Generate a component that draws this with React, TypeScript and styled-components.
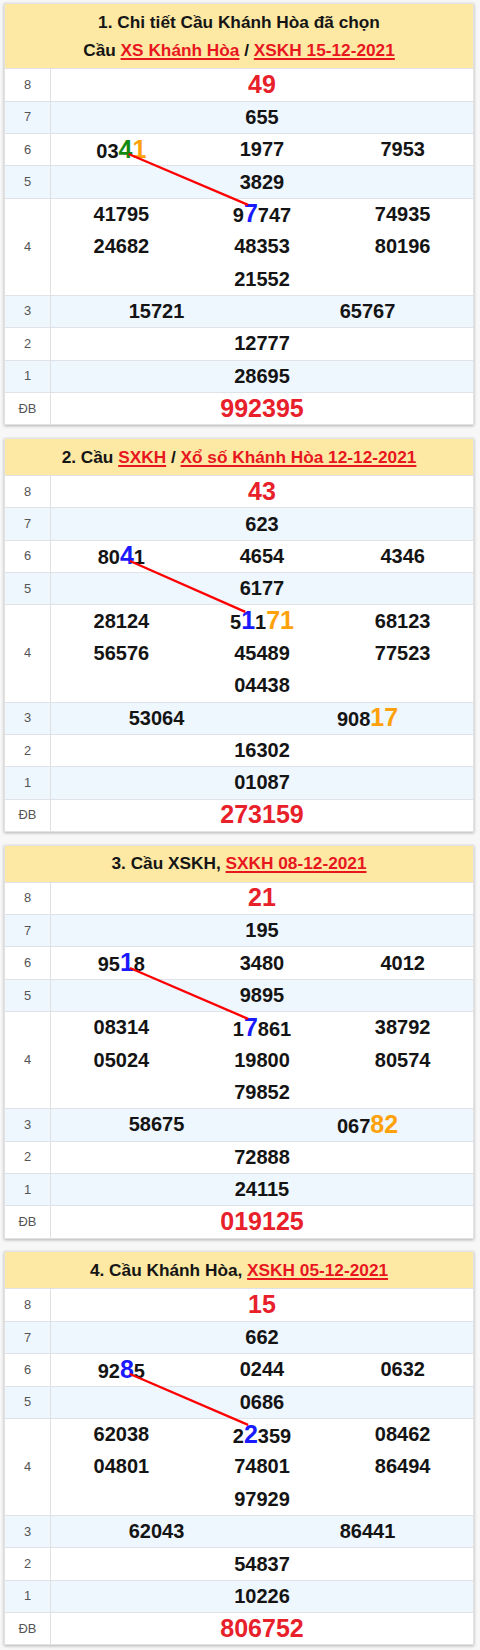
import React, { useLayoutEffect, useRef, useState } from "react";
import styled, { createGlobalStyle } from "styled-components";

const U = 356 / 11;

type Hl = { at: number; len?: number; color: string; anchor?: "from" | "to" };
type Num = { v: string; hl?: Hl[] };
type Item = string | Num;
type RowData = { label: string; items: Item[]; cols: number; red?: boolean; lines?: number };
type TitlePart = { t: string; link?: boolean };
type CardData = { lines: TitlePart[][]; rows: RowData[] };

const GREEN = "#128a12";
const ORANGE = "#ffa10a";
const BLUE = "#1a1aff";

const mkRows = (
  r8: string,
  r7: string,
  r6: Item[],
  r5: string,
  r4: Item[],
  r3: Item[],
  r2: string,
  r1: string,
  db: string
): RowData[] => [
  { label: "8", items: [r8], cols: 1, red: true },
  { label: "7", items: [r7], cols: 1 },
  { label: "6", items: r6, cols: 3 },
  { label: "5", items: [r5], cols: 1 },
  { label: "4", items: r4, cols: 3, lines: 3 },
  { label: "3", items: r3, cols: 2 },
  { label: "2", items: [r2], cols: 1 },
  { label: "1", items: [r1], cols: 1 },
  { label: "ĐB", items: [db], cols: 1, red: true },
];

const cards: CardData[] = [
  {
    lines: [
      [{ t: "1. Chi tiết Cầu Khánh Hòa đã chọn" }],
      [
        { t: "Cầu " },
        { t: "XS Khánh Hòa", link: true },
        { t: " / " },
        { t: "XSKH 15-12-2021", link: true },
      ],
    ],
    rows: mkRows(
      "49",
      "655",
      [
        { v: "0341", hl: [{ at: 2, color: GREEN, anchor: "from" }, { at: 3, color: ORANGE }] },
        "1977",
        "7953",
      ],
      "3829",
      ["41795", { v: "97747", hl: [{ at: 1, color: BLUE, anchor: "to" }] }, "74935", "24682", "48353", "80196", "21552"],
      ["15721", "65767"],
      "12777",
      "28695",
      "992395"
    ),
  },
  {
    lines: [
      [
        { t: "2. Cầu " },
        { t: "SXKH", link: true },
        { t: " / " },
        { t: "Xổ số Khánh Hòa 12-12-2021", link: true },
      ],
    ],
    rows: mkRows(
      "43",
      "623",
      [{ v: "8041", hl: [{ at: 2, color: BLUE, anchor: "from" }] }, "4654", "4346"],
      "6177",
      [
        "28124",
        { v: "51171", hl: [{ at: 1, color: BLUE, anchor: "to" }, { at: 3, len: 2, color: ORANGE }] },
        "68123",
        "56576",
        "45489",
        "77523",
        "04438",
      ],
      ["53064", { v: "90817", hl: [{ at: 3, len: 2, color: ORANGE }] }],
      "16302",
      "01087",
      "273159"
    ),
  },
  {
    lines: [[{ t: "3. Cầu XSKH, " }, { t: "SXKH 08-12-2021", link: true }]],
    rows: mkRows(
      "21",
      "195",
      [{ v: "9518", hl: [{ at: 2, color: BLUE, anchor: "from" }] }, "3480", "4012"],
      "9895",
      ["08314", { v: "17861", hl: [{ at: 1, color: BLUE, anchor: "to" }] }, "38792", "05024", "19800", "80574", "79852"],
      ["58675", { v: "06782", hl: [{ at: 3, len: 2, color: ORANGE }] }],
      "72888",
      "24115",
      "019125"
    ),
  },
  {
    lines: [[{ t: "4. Cầu Khánh Hòa, " }, { t: "XSKH 05-12-2021", link: true }]],
    rows: mkRows(
      "15",
      "662",
      [{ v: "9285", hl: [{ at: 2, color: BLUE, anchor: "from" }] }, "0244", "0632"],
      "0686",
      ["62038", { v: "22359", hl: [{ at: 1, color: BLUE, anchor: "to" }] }, "08462", "04801", "74801", "86494", "97929"],
      ["62043", "86441"],
      "54837",
      "10226",
      "806752"
    ),
  },
];

const GlobalStyle = createGlobalStyle`
  html, body { margin: 0; padding: 0; background: #f7f7f7; }
  body { font-family: "Liberation Sans", Arial, sans-serif; }
  * { box-sizing: border-box; }
`;

const Page = styled.div`
  display: flex;
  flex-direction: column;
  gap: 12.6px;
  padding: 2.7px 6px 4px 4px;
  width: 480px;
`;

const Card = styled.section`
  background: #fff;
  border: 1px solid #e2e2e2;
  box-shadow: 0 1px 3px rgba(0, 0, 0, 0.28);
`;

const Header = styled.div`
  background: #fde9a4;
  padding: 3.9px 6px;
  text-align: center;
`;

const TitleLine = styled.div`
  font-size: 17.26px;
  font-weight: bold;
  line-height: 28.4px;
  color: #151515;
  white-space: nowrap;
`;

const TitleLink = styled.a`
  color: #e8161e;
  text-decoration: underline;
  text-decoration-thickness: 1.5px;
  text-underline-offset: 2px;
`;

const Body = styled.div`
  position: relative;
`;

const Row = styled.div<{ $alt: boolean }>`
  display: grid;
  grid-template-columns: 46px 1fr;
  background: ${(p) => (p.$alt ? "#eef6fe" : "#ffffff")};
  box-shadow: inset 0 1px 0 #dfe3e8;
`;

const Label = styled.div`
  display: flex;
  align-items: center;
  justify-content: center;
  font-size: 12.9px;
  color: #555;
  border-right: 1px solid #e0e0e0;
`;

const Values = styled.div<{ $cols: number }>`
  display: grid;
  grid-template-columns: repeat(${(p) => p.$cols}, 1fr);
  grid-auto-rows: ${U}px;
  align-items: center;
  justify-items: center;
`;

const Value = styled.div<{ $red?: boolean; $col?: number }>`
  font-weight: bold;
  font-size: ${(p) => (p.$red ? "25px" : "20px")};
  color: ${(p) => (p.$red ? "#e8202a" : "#141414")};
  line-height: 1;
  white-space: nowrap;
  ${(p) => (p.$col ? `grid-column: ${p.$col};` : "")}
`;

const Hi = styled.span<{ $color: string }>`
  font-size: 25px;
  color: ${(p) => p.$color};
`;

const Overlay = styled.svg`
  position: absolute;
  inset: 0;
  width: 100%;
  height: 100%;
  pointer-events: none;
  overflow: visible;
`;

function renderNum(item: Item) {
  if (typeof item === "string") return item;
  const { v, hl = [] } = item;
  const out: React.ReactNode[] = [];
  let i = 0;
  const sorted = [...hl].sort((a, b) => a.at - b.at);
  sorted.forEach((h, k) => {
    if (h.at > i) out.push(v.slice(i, h.at));
    const len = h.len ?? 1;
    out.push(
      <Hi key={k} $color={h.color} data-anchor={h.anchor}>
        {v.slice(h.at, h.at + len)}
      </Hi>
    );
    i = h.at + len;
  });
  if (i < v.length) out.push(v.slice(i));
  return out;
}

type Seg = { x1: number; y1: number; x2: number; y2: number };

function ResultCard({ data }: { data: CardData }) {
  const bodyRef = useRef<HTMLDivElement>(null);
  const [seg, setSeg] = useState<Seg | null>(null);

  useLayoutEffect(() => {
    const measure = () => {
      const body = bodyRef.current;
      if (!body) return;
      const from = body.querySelector('[data-anchor="from"]');
      const to = body.querySelector('[data-anchor="to"]');
      if (!from || !to) return;
      const b = body.getBoundingClientRect();
      const f = from.getBoundingClientRect();
      const t = to.getBoundingClientRect();
      const fBase = f.top + (f.height - 25 * 1.117) / 2 + 25 * 0.905;
      const tBase = t.top + (t.height - 25 * 1.117) / 2 + 25 * 0.905;
      setSeg({
        x1: f.left + f.width * 0.72 - b.left,
        y1: fBase - 3 - b.top,
        x2: t.left + t.width * 0.3 - b.left,
        y2: tBase - 25 * 0.716 + 1 - b.top,
      });
    };
    measure();
    if (document.fonts && document.fonts.ready) document.fonts.ready.then(measure);
  }, []);

  return (
    <Card>
      <Header>
        {data.lines.map((line, li) => (
          <TitleLine key={li}>
            {line.map((p, pi) =>
              p.link ? (
                <TitleLink key={pi} href="#">
                  {p.t}
                </TitleLink>
              ) : (
                <React.Fragment key={pi}>{p.t}</React.Fragment>
              )
            )}
          </TitleLine>
        ))}
      </Header>
      <Body ref={bodyRef}>
        {data.rows.map((r, ri) => (
          <Row key={ri} $alt={ri % 2 === 1}>
            <Label>{r.label}</Label>
            <Values $cols={r.cols}>
              {r.items.map((it, ii) => (
                <Value key={ii} $red={r.red} $col={r.cols === 3 && ii === 6 ? 2 : undefined}>
                  {renderNum(it)}
                </Value>
              ))}
            </Values>
          </Row>
        ))}
        {seg && (
          <Overlay>
            <line x1={seg.x1} y1={seg.y1} x2={seg.x2} y2={seg.y2} stroke="#ff0000" strokeWidth={2.3} />
          </Overlay>
        )}
      </Body>
    </Card>
  );
}

export default function App() {
  return (
    <>
      <GlobalStyle />
      <Page>
        {cards.map((c, i) => (
          <ResultCard key={i} data={c} />
        ))}
      </Page>
    </>
  );
}
